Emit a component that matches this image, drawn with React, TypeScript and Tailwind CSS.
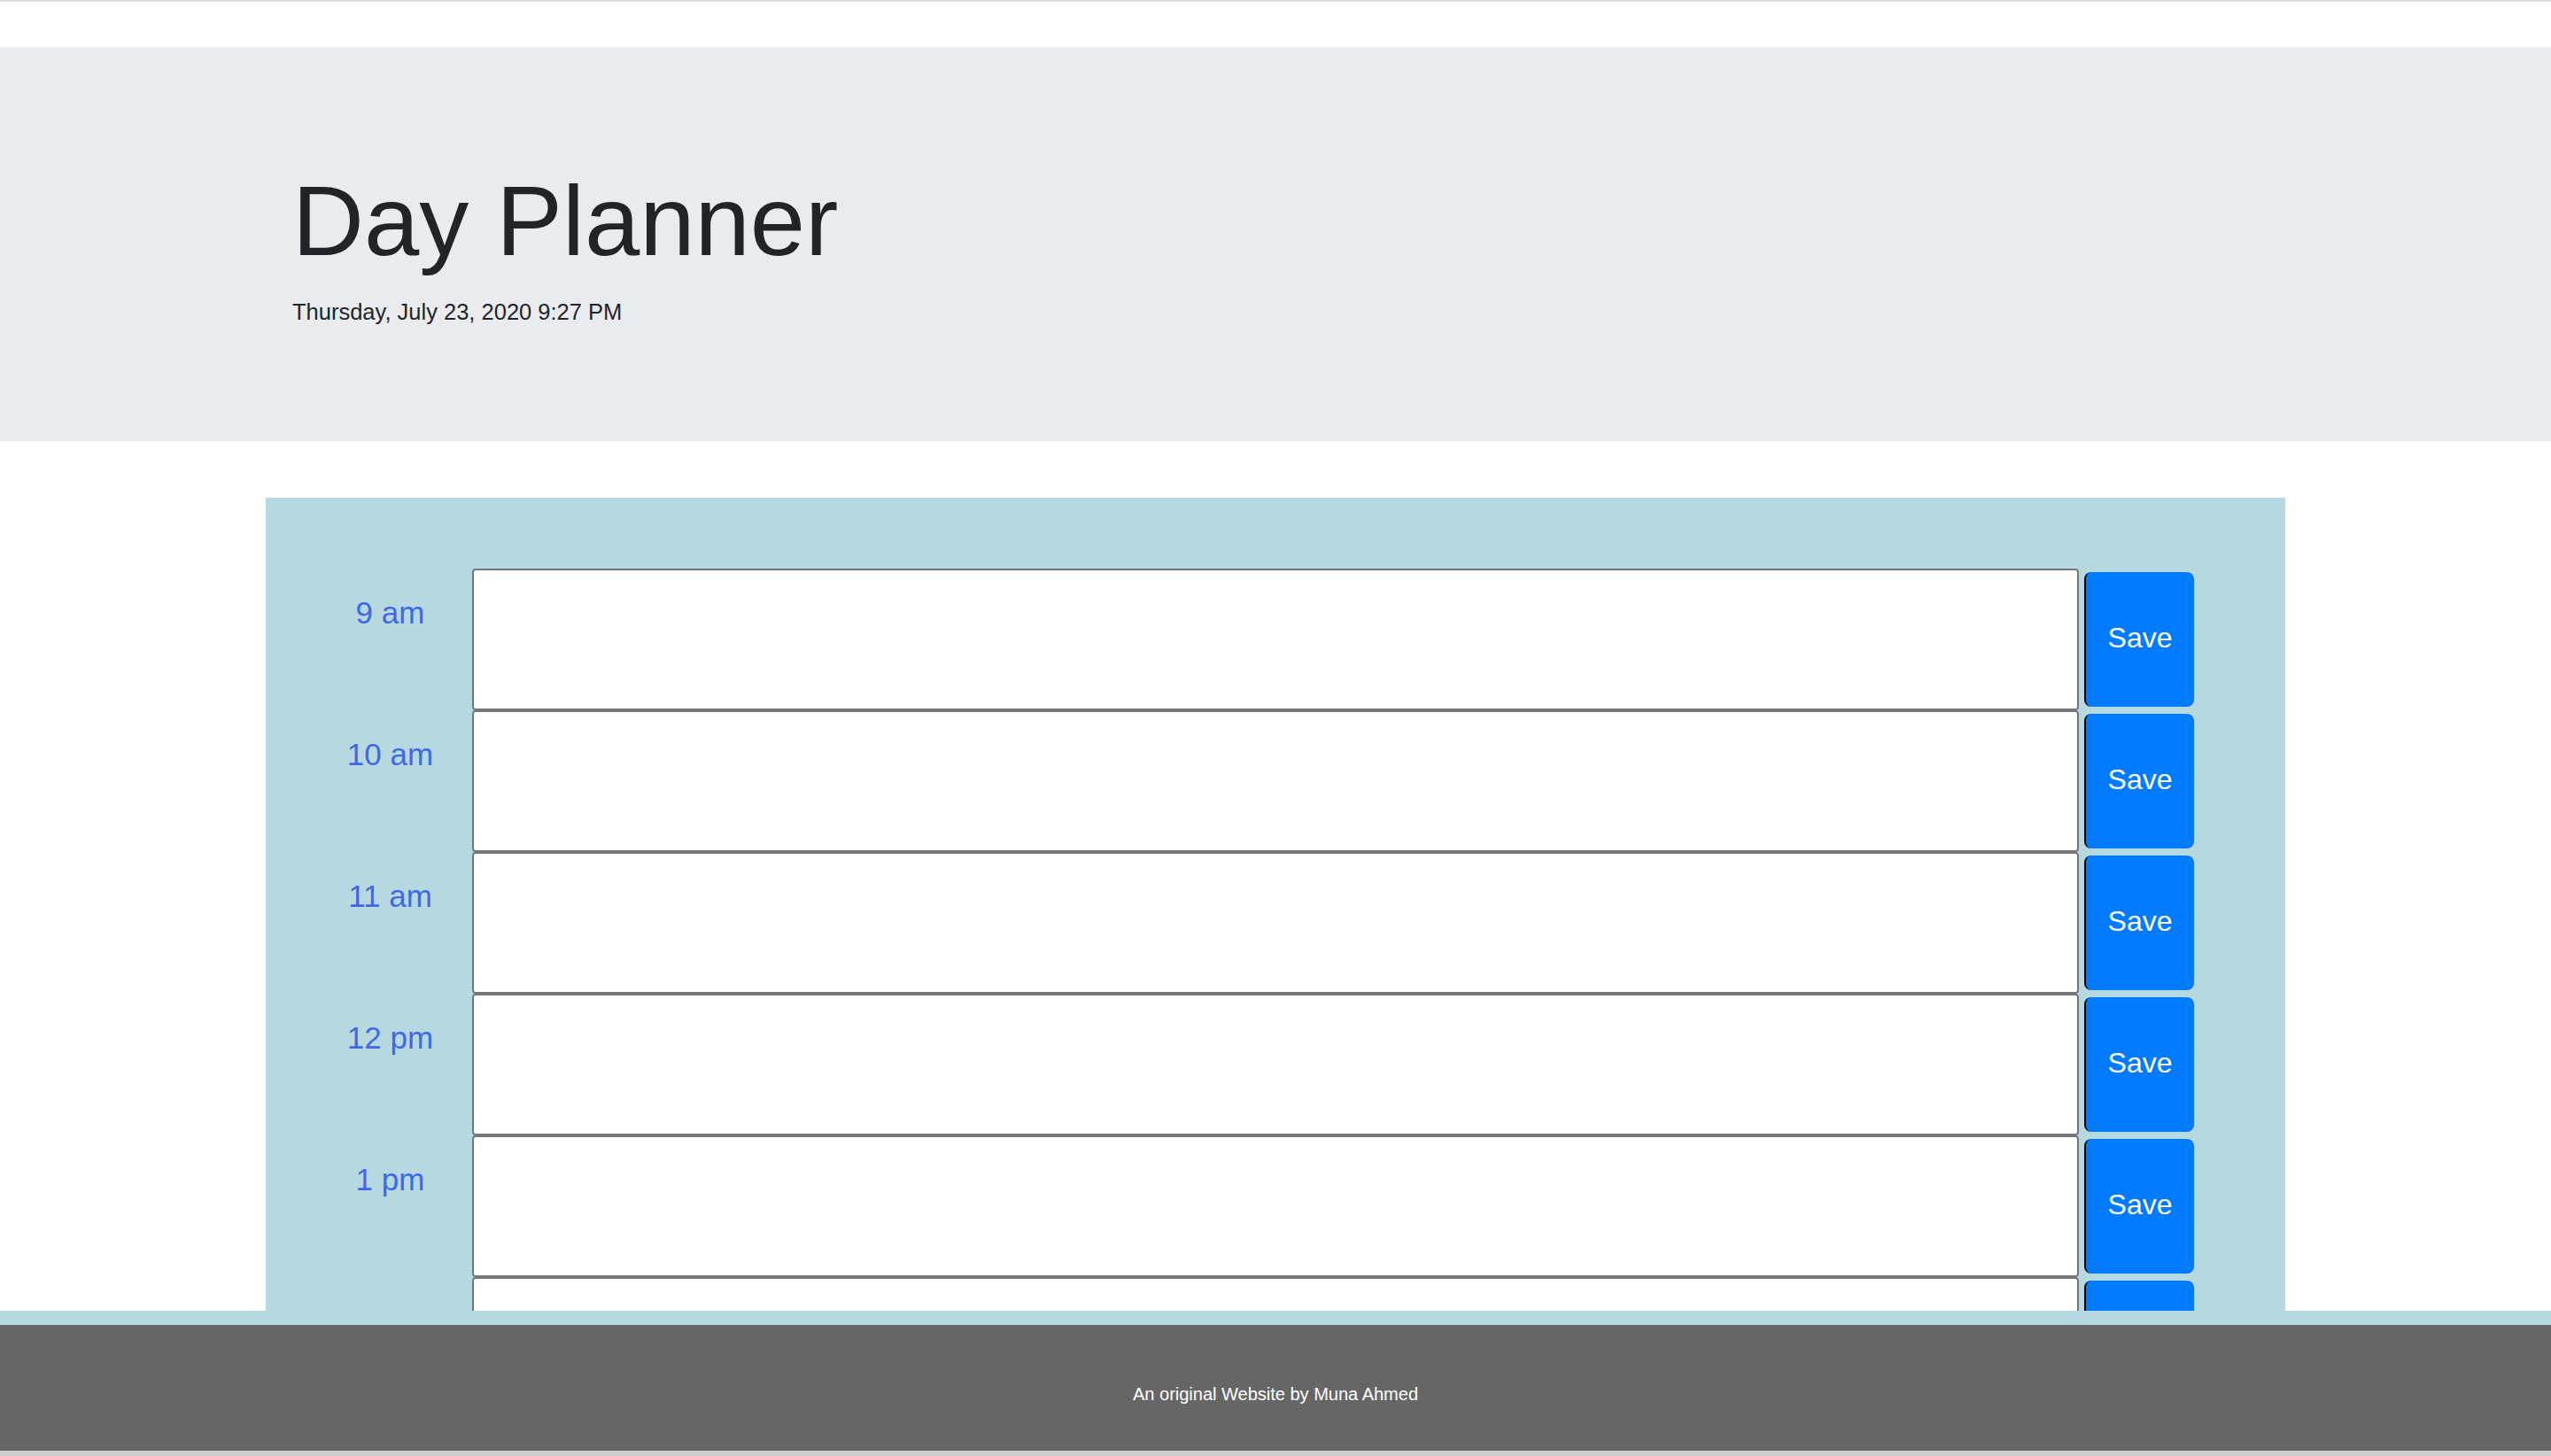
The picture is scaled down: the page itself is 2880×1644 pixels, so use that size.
import React from "react";

const hours = ["9 am", "10 am", "11 am", "12 pm", "1 pm", "2 pm"];

export default function App() {
  return (
    <div
      className="relative h-[1644px] w-full overflow-hidden bg-white text-[#212529]"
      style={{ fontFamily: '"Liberation Sans", Arial, sans-serif' }}
    >
      <div className="h-[2px] w-full bg-[#dcdce0]" />
      <header className="mt-[51px] h-[445px] w-full bg-[#e9ebef] pl-[330px] pt-[130px]">
        <h1 className="mb-[16px] text-[112px] font-light leading-[1.2] text-[#212529]">Day Planner</h1>
        <p className="text-[25.5px] leading-[1.5] text-[#212529]">Thursday, July 23, 2020 9:27 PM</p>
      </header>

      <main className="mx-auto mt-[64px] w-[2280px] bg-[#b6d8e1] pb-[40px] pl-[48px] pr-[103px] pt-[80px]">
        {hours.map((h) => (
          <div key={h} className="flex h-[160px]">
            <div className="w-[185px] shrink-0 pt-[24px] text-center text-[35px] leading-[1.5] text-[#4169e1]">
              {h}
            </div>
            <textarea className="h-[160px] flex-1 resize-none rounded-[4px] border-2 border-[#767676] bg-white" />
            <button className="my-[4px] ml-[6px] w-[124px] shrink-0 rounded-[8px] border-l-2 border-black bg-[#007bff] pb-[4px] text-[32px] text-white">
              Save
            </button>
          </div>
        ))}
      </main>

      <footer className="fixed bottom-0 left-0 w-full">
        <div className="h-[16px] w-full bg-[#b6d8e1]" />
        <div className="h-[142px] w-full bg-[#666666] pt-[63px] text-center text-[20px] leading-[1.5] text-white">
          An original Website by Muna Ahmed
        </div>
        <div className="h-[6px] w-full bg-[#cccccc]" />
      </footer>
    </div>
  );
}
